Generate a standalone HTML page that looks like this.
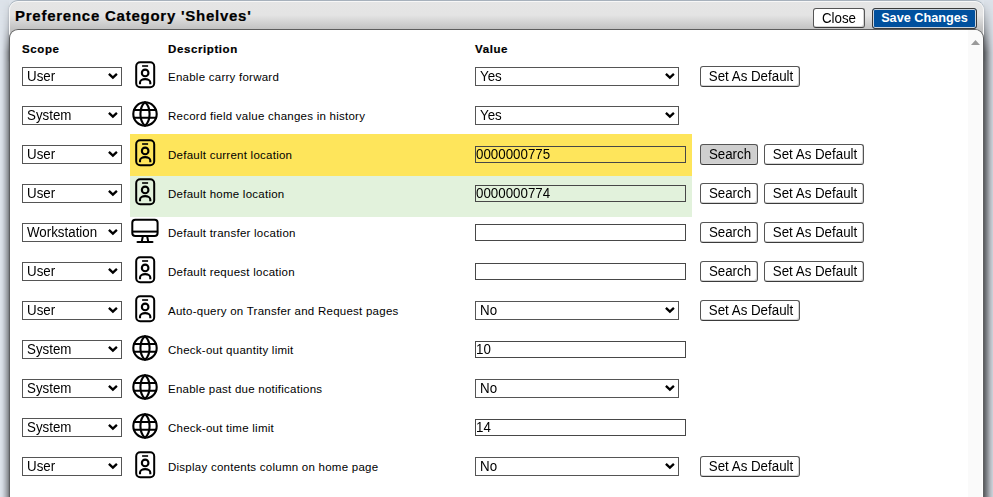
<!DOCTYPE html>
<html><head><meta charset="utf-8">
<style>
html,body{margin:0;padding:0;width:993px;height:497px;overflow:hidden;background:#dde3ea;font-family:"Liberation Sans",sans-serif;}
.abs{position:absolute;}
.shL{position:absolute;left:0;top:0;width:9px;height:497px;
 background:linear-gradient(to right,#dce2ea 0px,#dce2ea 1px,#d8dee6 1px,#d8dee6 2px,#d2d8e0 2px,#d2d8e0 3px,#c8cdd5 3px,#c8cdd5 4px,#bcc1c9 4px,#bcc1c9 5px,#b0b5bc 5px,#b0b5bc 6px,#a2a6ac 6px,#a2a6ac 7px,#94989d 7px,#94989d 8px,#80848a 8px,#80848a 9px);
 -webkit-mask-image:linear-gradient(to bottom,rgba(0,0,0,0) 0px,rgba(0,0,0,.1) 8px,rgba(0,0,0,.35) 28px,#000 52px);}
.shR{position:absolute;left:984px;top:0;width:9px;height:497px;
 background:linear-gradient(to right,#606366 0px,#606366 1px,#6d7075 1px,#6d7075 2px,#7a7e83 2px,#7a7e83 3px,#898d92 3px,#898d92 4px,#999ca2 4px,#999ca2 5px,#a8adb3 5px,#a8adb3 6px,#b5bac1 6px,#b5bac1 7px,#c0c5cc 7px,#c0c5cc 8px,#c9ced6 8px,#c9ced6 9px);
 -webkit-mask-image:linear-gradient(to bottom,rgba(0,0,0,0) 0px,rgba(0,0,0,.1) 8px,rgba(0,0,0,.45) 28px,#000 52px);}
.shT{position:absolute;left:18px;top:0;width:958px;height:1px;background:#bac2cc;}
.dlg{position:absolute;left:9px;top:1px;width:975px;height:60px;box-sizing:border-box;border:1px solid #f7f7f7;border-bottom:none;border-radius:9px 9px 0 0;background:linear-gradient(to bottom,#e5e5e5 0px,#e4e4e4 13px,#c2c2c2 27px);box-shadow:0 -1px 0 rgba(120,135,150,.45),0 0 2px rgba(40,50,60,.3);}
.title{position:absolute;font-weight:bold;font-size:15px;letter-spacing:0.75px;color:#000;white-space:nowrap;-webkit-text-stroke:0.2px #000;}
.panel{position:absolute;left:9px;top:29px;width:975px;height:480px;box-sizing:border-box;background:#fff;border:1px solid #5f6062;border-top-color:#5c5c5c;border-radius:9px 9px 0 0;}
.btn{position:absolute;box-sizing:border-box;height:21px;border:1px solid #555;border-bottom-color:#3a3a3a;border-radius:3px;background:#fff;box-shadow:inset -1px -1px 0 #d4d4d4;font-size:13.333px;color:#000;text-align:center;line-height:20px;white-space:nowrap;padding-left:2px;}
.btn.gray{background:#cfcfcf;}
.btn.blue{background:#00509e;color:#fff;font-weight:bold;font-size:12.7px;border-color:#3a3a3a;box-shadow:inset 0 0 0 1px #c9d3de;}
.sel{position:absolute;box-sizing:border-box;height:19px;border:1px solid #555;background:#fff;font-size:13.333px;line-height:18px;padding-left:4px;white-space:nowrap;}
.sel svg{position:absolute;right:2px;top:4px;}
.inp{position:absolute;box-sizing:border-box;height:17px;border:1px solid #474747;background:#fff;font-size:13.333px;line-height:16px;padding-left:0px;white-space:nowrap;}
.hdr{position:absolute;font-weight:bold;font-size:11.5px;letter-spacing:0.6px;white-space:nowrap;-webkit-text-stroke:0.2px #000;}
.desc{position:absolute;font-size:11.5px;letter-spacing:0.25px;white-space:nowrap;color:#000;}
.icon{position:absolute;}
.t{display:inline-block;transform:scaleY(1.1);transform-origin:50% 13px;}
.scrolltrack{position:absolute;left:968px;top:30px;width:14px;height:470px;background:#fafafa;}
</style></head><body>
<div class="shL"></div>
<div class="shR"></div>
<div class="dlg"><div class="title" style="left:5px;top:5px">Preference Category 'Shelves'</div></div>
<div class="panel"></div>
<div class="scrolltrack" style="border-top-right-radius:7px"></div>
<svg style="position:absolute;left:970px;top:39px" width="11" height="7" viewBox="0 0 11 7"><path d="M1 6 L5.5 1 L10 6 Z" fill="#999"/></svg>
<div class="btn" style="left:813px;top:8px;width:52px;height:20px;line-height:19px;padding-left:0"><span class="t">Close</span></div>
<div class="btn blue" style="left:872px;top:8px;width:105px;height:21px;line-height:19px;padding-left:0">Save Changes</div>
<div class="hdr" style="left:22px;top:43px">Scope</div>
<div class="hdr" style="left:168px;top:43px">Description</div>
<div class="hdr" style="left:475px;top:43px">Value</div>
<div class="sel" style="left:22px;top:67px;width:100px"><span class="t">User</span><svg width="12" height="9" viewBox="0 0 12 9" style="overflow:visible"><path d="M1.9 1.9 L5.9 5.7 L9.9 1.9" fill="none" stroke="#000" stroke-width="2.3"/></svg></div>
<svg class="icon" style="left:134px;top:60px" width="22" height="29" viewBox="0 0 22 29"><rect x="2.2" y="2.2" width="18" height="25" rx="4" fill="none" stroke="#000" stroke-width="2"/><rect x="8.1" y="5.2" width="6" height="1.6" fill="#000"/><circle cx="11.15" cy="12.9" r="3.3" fill="none" stroke="#000" stroke-width="2.1"/><path d="M6 24.3 V22.4 A5.15 3.3 0 0 1 16.3 22.4 V24.3" fill="none" stroke="#000" stroke-width="2.1"/></svg>
<div class="desc" style="left:168px;top:71px">Enable carry forward</div>
<div class="sel" style="left:475px;top:67px;width:204px"><span class="t">Yes</span><svg width="12" height="9" viewBox="0 0 12 9" style="overflow:visible"><path d="M1.9 1.9 L5.9 5.7 L9.9 1.9" fill="none" stroke="#000" stroke-width="2.3"/></svg></div>
<div class="btn" style="left:700px;top:66px;width:100px"><span class="t">Set As Default</span></div>
<div class="sel" style="left:22px;top:106px;width:100px"><span class="t">System</span><svg width="12" height="9" viewBox="0 0 12 9" style="overflow:visible"><path d="M1.9 1.9 L5.9 5.7 L9.9 1.9" fill="none" stroke="#000" stroke-width="2.3"/></svg></div>
<svg class="icon" style="left:131px;top:100px" width="28" height="28" viewBox="0 0 28 28"><circle cx="14" cy="14" r="11.7" fill="none" stroke="#000" stroke-width="2.1"/><path d="M14 2.3 C7.9 7.2 7.9 20.8 14 25.7 C20.1 20.8 20.1 7.2 14 2.3 Z" fill="none" stroke="#000" stroke-width="2.1"/><path d="M2.3 10 H25.7 M2.3 17.8 H25.7" stroke="#000" stroke-width="2.1"/></svg>
<div class="desc" style="left:168px;top:110px">Record field value changes in history</div>
<div class="sel" style="left:475px;top:106px;width:204px"><span class="t">Yes</span><svg width="12" height="9" viewBox="0 0 12 9" style="overflow:visible"><path d="M1.9 1.9 L5.9 5.7 L9.9 1.9" fill="none" stroke="#000" stroke-width="2.3"/></svg></div>
<div class="abs" style="left:130px;top:134px;width:562px;height:42px;background:#fee55b"></div>
<div class="sel" style="left:22px;top:145px;width:100px"><span class="t">User</span><svg width="12" height="9" viewBox="0 0 12 9" style="overflow:visible"><path d="M1.9 1.9 L5.9 5.7 L9.9 1.9" fill="none" stroke="#000" stroke-width="2.3"/></svg></div>
<svg class="icon" style="left:134px;top:138px" width="22" height="29" viewBox="0 0 22 29"><rect x="2.2" y="2.2" width="18" height="25" rx="4" fill="none" stroke="#000" stroke-width="2"/><rect x="8.1" y="5.2" width="6" height="1.6" fill="#000"/><circle cx="11.15" cy="12.9" r="3.3" fill="none" stroke="#000" stroke-width="2.1"/><path d="M6 24.3 V22.4 A5.15 3.3 0 0 1 16.3 22.4 V24.3" fill="none" stroke="#000" stroke-width="2.1"/></svg>
<div class="desc" style="left:168px;top:149px">Default current location</div>
<div class="inp" style="left:475px;top:146px;width:211px;background:#fee55b"><span class="t">0000000775</span></div>
<div class="btn gray" style="left:700px;top:144px;width:58px"><span class="t">Search</span></div>
<div class="btn" style="left:764px;top:144px;width:100px"><span class="t">Set As Default</span></div>
<div class="abs" style="left:130px;top:176px;width:562px;height:41px;background:#e2f2dc"></div>
<div class="sel" style="left:22px;top:184px;width:100px"><span class="t">User</span><svg width="12" height="9" viewBox="0 0 12 9" style="overflow:visible"><path d="M1.9 1.9 L5.9 5.7 L9.9 1.9" fill="none" stroke="#000" stroke-width="2.3"/></svg></div>
<svg class="icon" style="left:134px;top:177px" width="22" height="29" viewBox="0 0 22 29"><rect x="2.2" y="2.2" width="18" height="25" rx="4" fill="none" stroke="#000" stroke-width="2"/><rect x="8.1" y="5.2" width="6" height="1.6" fill="#000"/><circle cx="11.15" cy="12.9" r="3.3" fill="none" stroke="#000" stroke-width="2.1"/><path d="M6 24.3 V22.4 A5.15 3.3 0 0 1 16.3 22.4 V24.3" fill="none" stroke="#000" stroke-width="2.1"/></svg>
<div class="desc" style="left:168px;top:188px">Default home location</div>
<div class="inp" style="left:475px;top:185px;width:211px;background:#e2f2dc"><span class="t">0000000774</span></div>
<div class="btn" style="left:700px;top:183px;width:58px"><span class="t">Search</span></div>
<div class="btn" style="left:764px;top:183px;width:100px"><span class="t">Set As Default</span></div>
<div class="sel" style="left:22px;top:223px;width:100px"><span class="t">Workstation</span><svg width="12" height="9" viewBox="0 0 12 9" style="overflow:visible"><path d="M1.9 1.9 L5.9 5.7 L9.9 1.9" fill="none" stroke="#000" stroke-width="2.3"/></svg></div>
<svg class="icon" style="left:130px;top:217px" width="30" height="28" viewBox="0 0 30 28"><rect x="2.3" y="2.8" width="25.3" height="16.1" rx="3" fill="none" stroke="#000" stroke-width="2"/><path d="M2.3 14.6 H27.6" stroke="#000" stroke-width="2"/><path d="M12.9 19 L11.8 24.4 M17.1 19 L18.2 24.4" fill="none" stroke="#000" stroke-width="2"/><path d="M7.6 25 H22.4" stroke="#000" stroke-width="2.2" stroke-linecap="round"/></svg>
<div class="desc" style="left:168px;top:227px">Default transfer location</div>
<div class="inp" style="left:475px;top:224px;width:211px;background:#fff"><span class="t"></span></div>
<div class="btn" style="left:700px;top:222px;width:58px"><span class="t">Search</span></div>
<div class="btn" style="left:764px;top:222px;width:100px"><span class="t">Set As Default</span></div>
<div class="sel" style="left:22px;top:262px;width:100px"><span class="t">User</span><svg width="12" height="9" viewBox="0 0 12 9" style="overflow:visible"><path d="M1.9 1.9 L5.9 5.7 L9.9 1.9" fill="none" stroke="#000" stroke-width="2.3"/></svg></div>
<svg class="icon" style="left:134px;top:255px" width="22" height="29" viewBox="0 0 22 29"><rect x="2.2" y="2.2" width="18" height="25" rx="4" fill="none" stroke="#000" stroke-width="2"/><rect x="8.1" y="5.2" width="6" height="1.6" fill="#000"/><circle cx="11.15" cy="12.9" r="3.3" fill="none" stroke="#000" stroke-width="2.1"/><path d="M6 24.3 V22.4 A5.15 3.3 0 0 1 16.3 22.4 V24.3" fill="none" stroke="#000" stroke-width="2.1"/></svg>
<div class="desc" style="left:168px;top:266px">Default request location</div>
<div class="inp" style="left:475px;top:263px;width:211px;background:#fff"><span class="t"></span></div>
<div class="btn" style="left:700px;top:261px;width:58px"><span class="t">Search</span></div>
<div class="btn" style="left:764px;top:261px;width:100px"><span class="t">Set As Default</span></div>
<div class="sel" style="left:22px;top:301px;width:100px"><span class="t">User</span><svg width="12" height="9" viewBox="0 0 12 9" style="overflow:visible"><path d="M1.9 1.9 L5.9 5.7 L9.9 1.9" fill="none" stroke="#000" stroke-width="2.3"/></svg></div>
<svg class="icon" style="left:134px;top:294px" width="22" height="29" viewBox="0 0 22 29"><rect x="2.2" y="2.2" width="18" height="25" rx="4" fill="none" stroke="#000" stroke-width="2"/><rect x="8.1" y="5.2" width="6" height="1.6" fill="#000"/><circle cx="11.15" cy="12.9" r="3.3" fill="none" stroke="#000" stroke-width="2.1"/><path d="M6 24.3 V22.4 A5.15 3.3 0 0 1 16.3 22.4 V24.3" fill="none" stroke="#000" stroke-width="2.1"/></svg>
<div class="desc" style="left:168px;top:305px">Auto-query on Transfer and Request pages</div>
<div class="sel" style="left:475px;top:301px;width:204px"><span class="t">No</span><svg width="12" height="9" viewBox="0 0 12 9" style="overflow:visible"><path d="M1.9 1.9 L5.9 5.7 L9.9 1.9" fill="none" stroke="#000" stroke-width="2.3"/></svg></div>
<div class="btn" style="left:700px;top:300px;width:100px"><span class="t">Set As Default</span></div>
<div class="sel" style="left:22px;top:340px;width:100px"><span class="t">System</span><svg width="12" height="9" viewBox="0 0 12 9" style="overflow:visible"><path d="M1.9 1.9 L5.9 5.7 L9.9 1.9" fill="none" stroke="#000" stroke-width="2.3"/></svg></div>
<svg class="icon" style="left:131px;top:334px" width="28" height="28" viewBox="0 0 28 28"><circle cx="14" cy="14" r="11.7" fill="none" stroke="#000" stroke-width="2.1"/><path d="M14 2.3 C7.9 7.2 7.9 20.8 14 25.7 C20.1 20.8 20.1 7.2 14 2.3 Z" fill="none" stroke="#000" stroke-width="2.1"/><path d="M2.3 10 H25.7 M2.3 17.8 H25.7" stroke="#000" stroke-width="2.1"/></svg>
<div class="desc" style="left:168px;top:344px">Check-out quantity limit</div>
<div class="inp" style="left:475px;top:341px;width:211px;background:#fff"><span class="t">10</span></div>
<div class="sel" style="left:22px;top:379px;width:100px"><span class="t">System</span><svg width="12" height="9" viewBox="0 0 12 9" style="overflow:visible"><path d="M1.9 1.9 L5.9 5.7 L9.9 1.9" fill="none" stroke="#000" stroke-width="2.3"/></svg></div>
<svg class="icon" style="left:131px;top:373px" width="28" height="28" viewBox="0 0 28 28"><circle cx="14" cy="14" r="11.7" fill="none" stroke="#000" stroke-width="2.1"/><path d="M14 2.3 C7.9 7.2 7.9 20.8 14 25.7 C20.1 20.8 20.1 7.2 14 2.3 Z" fill="none" stroke="#000" stroke-width="2.1"/><path d="M2.3 10 H25.7 M2.3 17.8 H25.7" stroke="#000" stroke-width="2.1"/></svg>
<div class="desc" style="left:168px;top:383px">Enable past due notifications</div>
<div class="sel" style="left:475px;top:379px;width:204px"><span class="t">No</span><svg width="12" height="9" viewBox="0 0 12 9" style="overflow:visible"><path d="M1.9 1.9 L5.9 5.7 L9.9 1.9" fill="none" stroke="#000" stroke-width="2.3"/></svg></div>
<div class="sel" style="left:22px;top:418px;width:100px"><span class="t">System</span><svg width="12" height="9" viewBox="0 0 12 9" style="overflow:visible"><path d="M1.9 1.9 L5.9 5.7 L9.9 1.9" fill="none" stroke="#000" stroke-width="2.3"/></svg></div>
<svg class="icon" style="left:131px;top:412px" width="28" height="28" viewBox="0 0 28 28"><circle cx="14" cy="14" r="11.7" fill="none" stroke="#000" stroke-width="2.1"/><path d="M14 2.3 C7.9 7.2 7.9 20.8 14 25.7 C20.1 20.8 20.1 7.2 14 2.3 Z" fill="none" stroke="#000" stroke-width="2.1"/><path d="M2.3 10 H25.7 M2.3 17.8 H25.7" stroke="#000" stroke-width="2.1"/></svg>
<div class="desc" style="left:168px;top:422px">Check-out time limit</div>
<div class="inp" style="left:475px;top:419px;width:211px;background:#fff"><span class="t">14</span></div>
<div class="sel" style="left:22px;top:457px;width:100px"><span class="t">User</span><svg width="12" height="9" viewBox="0 0 12 9" style="overflow:visible"><path d="M1.9 1.9 L5.9 5.7 L9.9 1.9" fill="none" stroke="#000" stroke-width="2.3"/></svg></div>
<svg class="icon" style="left:134px;top:450px" width="22" height="29" viewBox="0 0 22 29"><rect x="2.2" y="2.2" width="18" height="25" rx="4" fill="none" stroke="#000" stroke-width="2"/><rect x="8.1" y="5.2" width="6" height="1.6" fill="#000"/><circle cx="11.15" cy="12.9" r="3.3" fill="none" stroke="#000" stroke-width="2.1"/><path d="M6 24.3 V22.4 A5.15 3.3 0 0 1 16.3 22.4 V24.3" fill="none" stroke="#000" stroke-width="2.1"/></svg>
<div class="desc" style="left:168px;top:461px">Display contents column on home page</div>
<div class="sel" style="left:475px;top:457px;width:204px"><span class="t">No</span><svg width="12" height="9" viewBox="0 0 12 9" style="overflow:visible"><path d="M1.9 1.9 L5.9 5.7 L9.9 1.9" fill="none" stroke="#000" stroke-width="2.3"/></svg></div>
<div class="btn" style="left:700px;top:456px;width:100px"><span class="t">Set As Default</span></div>
</body></html>
